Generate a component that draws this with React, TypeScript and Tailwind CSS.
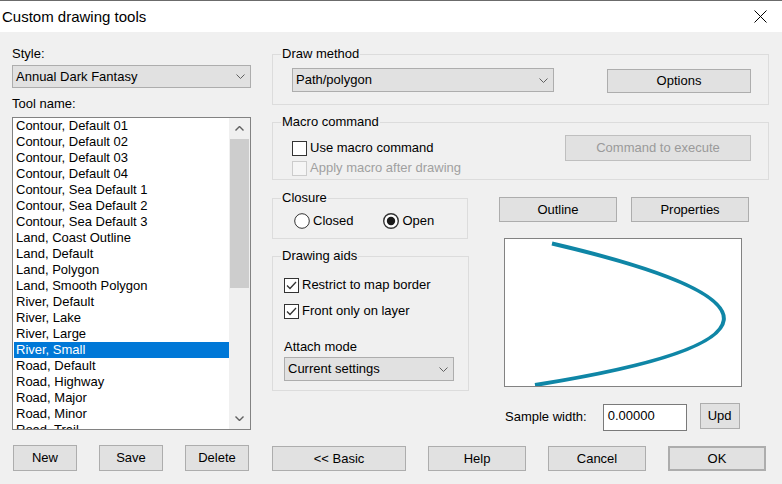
import React from "react";

const items = [
  "Contour, Default 01",
  "Contour, Default 02",
  "Contour, Default 03",
  "Contour, Default 04",
  "Contour, Sea Default 1",
  "Contour, Sea Default 2",
  "Contour, Sea Default 3",
  "Land, Coast Outline",
  "Land, Default",
  "Land, Polygon",
  "Land, Smooth Polygon",
  "River, Default",
  "River, Lake",
  "River, Large",
  "River, Small",
  "Road, Default",
  "Road, Highway",
  "Road, Major",
  "Road, Minor",
  "Road, Trail",
];

function Chevron() {
  return (
    <svg width="9" height="5" viewBox="0 0 9 5" className="shrink-0">
      <path d="M0.5 0.5 L4.5 4.5 L8.5 0.5" fill="none" stroke="#606060" strokeWidth="1" />
    </svg>
  );
}

function Combo({ text, className }: { text: string; className: string }) {
  return (
    <div className={`flex items-center justify-between border border-[#adadad] bg-[#e1e1e1] pl-[3px] pr-[5px] ${className}`}>
      <span>{text}</span>
      <Chevron />
    </div>
  );
}

function Btn({ text, className }: { text: string; className: string }) {
  return (
    <div className={`flex items-center justify-center border border-[#adadad] bg-[#e1e1e1] ${className}`}>{text}</div>
  );
}

function Check({ checked, disabled }: { checked?: boolean; disabled?: boolean }) {
  return (
    <div
      className={`flex h-[15px] w-[15px] shrink-0 items-center justify-center border ${
        disabled ? "border-[#cccccc] bg-[#f5f5f5]" : "border-[#333333] bg-white"
      }`}
    >
      {checked && (
        <svg width="11" height="9" viewBox="0 0 11 9">
          <path d="M1 4.5 L4 7.5 L10 1" fill="none" stroke="#333333" strokeWidth="1.3" />
        </svg>
      )}
    </div>
  );
}

function Radio({ checked }: { checked?: boolean }) {
  return (
    <svg width="16" height="16" viewBox="0 0 16 16" className="shrink-0">
      <circle cx="8" cy="8" r="7.3" fill="white" stroke="#333333" strokeWidth={checked ? 1.4 : 1} />
      {checked && <circle cx="8" cy="8" r="4.2" fill="#1a1a1a" />}
    </svg>
  );
}

function Group({ label, className, children }: { label: string; className: string; children?: React.ReactNode }) {
  return (
    <div className={`relative border border-[#dcdcdc] ${className}`}>
      <span className="absolute left-[8px] top-[-9px] bg-[#f0f0f0] px-[1px] leading-[16px]">{label}</span>
      {children}
    </div>
  );
}

export default function App() {
  return (
    <div className="h-[484px] w-[782px] overflow-hidden border-t border-[#6b6b6b] bg-[#f0f0f0] font-['Liberation_Sans',Arial,sans-serif] text-[13px] leading-[16px] text-black">
      {/* Title bar */}
      <div className="flex h-[31px] items-center justify-between bg-white pl-[2px] pr-[15px]">
        <span className="text-[15px]">Custom drawing tools</span>
        <svg width="13" height="13" viewBox="0 0 13 13">
          <path d="M0.5 0.5 L12.5 12.5 M12.5 0.5 L0.5 12.5" stroke="#000" strokeWidth="1" />
        </svg>
      </div>

      <div className="flex pl-[12px]">
        {/* Left column */}
        <div className="flex w-[239px] flex-col">
          <div className="mt-[14px] h-[16px]">Style:</div>
          <Combo text="Annual Dark Fantasy" className="mt-[3px] h-[23px]" />
          <div className="mt-[8px] h-[16px]">Tool name:</div>
          <div className="mt-[5px] flex h-[313px] overflow-hidden border border-[#828282] bg-white">
            <div className="flex-1 overflow-hidden pl-[1px]">
              {items.map((it) => (
                <div
                  key={it}
                  className={`h-[16px] pl-[2px] leading-[16px] ${it === "River, Small" ? "bg-[#0078d7] text-white" : ""}`}
                >
                  {it}
                </div>
              ))}
            </div>
            <div className="flex w-[21px] flex-col bg-[#f0f0f0]">
              <div className="flex h-[21px] items-center justify-center">
                <svg width="9" height="5" viewBox="0 0 9 5">
                  <path d="M0.5 4.5 L4.5 0.5 L8.5 4.5" fill="none" stroke="#606060" strokeWidth="1.4" />
                </svg>
              </div>
              <div className="mx-[1px] h-[149px] bg-[#cdcdcd]" />
              <div className="flex-1" />
              <div className="flex h-[21px] items-center justify-center">
                <svg width="9" height="5" viewBox="0 0 9 5">
                  <path d="M0.5 0.5 L4.5 4.5 L8.5 0.5" fill="none" stroke="#606060" strokeWidth="1.4" />
                </svg>
              </div>
            </div>
          </div>
          <div className="ml-[1px] mt-[15px] flex gap-[22px]">
            <Btn text="New" className="h-[26px] w-[64px]" />
            <Btn text="Save" className="h-[26px] w-[64px]" />
            <Btn text="Delete" className="h-[26px] w-[64px]" />
          </div>
        </div>

        {/* Right column */}
        <div className="ml-[21px] flex w-[497px] flex-col pt-[22px]">
          <Group label="Draw method" className="flex h-[51px] items-center pl-[19px] pr-[17px] pt-[1px]">
            <Combo text="Path/polygon" className="h-[24px] w-[262px]" />
            <Btn text="Options" className="ml-auto mt-[1px] h-[24px] w-[144px]" />
          </Group>

          <Group label="Macro command" className="mt-[17px] flex h-[58px] pl-[19px] pr-[17px]">
            <div className="flex flex-col pt-[17px]">
              <div className="flex h-[16px] items-center gap-[3px]">
                <Check />
                <span>Use macro command</span>
              </div>
              <div className="mt-[4px] flex h-[16px] items-center gap-[3px] text-[#a0a0a0]">
                <Check disabled />
                <span>Apply macro after drawing</span>
              </div>
            </div>
            <Btn
              text="Command to execute"
              className="ml-auto mt-[12px] h-[26px] w-[186px] border-[#bfbfbf] bg-[#cccccc] text-[#9a9a9a]"
            />
          </Group>

          <div className="mt-[17px] flex h-[234px]">
            <div className="flex w-[197px] flex-col">
              <Group label="Closure" className="mt-[1px] flex h-[41px] w-[196px] items-center pl-[21px] pt-[4px]">
                <div className="flex items-center gap-[3px]">
                  <Radio />
                  <span>Closed</span>
                </div>
                <div className="ml-[30px] flex items-center gap-[3px]">
                  <Radio checked />
                  <span>Open</span>
                </div>
              </Group>
              <Group label="Drawing aids" className="mt-[17px] flex h-[135px] flex-col pl-[11px] pt-[20px]">
                <div className="flex h-[16px] items-center gap-[3px]">
                  <Check checked />
                  <span>Restrict to map border</span>
                </div>
                <div className="mt-[10px] flex h-[16px] items-center gap-[3px]">
                  <Check checked />
                  <span>Front only on layer</span>
                </div>
                <div className="mt-[20px] h-[16px]">Attach mode</div>
                <Combo text="Current settings" className="mt-[2px] h-[24px] w-[170px]" />
              </Group>
            </div>

            <div className="ml-[30px] flex flex-col">
              <div className="flex gap-[14px]">
                <Btn text="Outline" className="h-[25px] w-[118px]" />
                <Btn text="Properties" className="h-[25px] w-[118px]" />
              </div>
              <div className="ml-[5px] mt-[16px] h-[149px] w-[238px] border border-[#828282] bg-white">
                <svg width="236" height="147" viewBox="0 0 236 147">
                  <path
                    d="M47 4.5 Q399 87 30 146"
                    fill="none"
                    stroke="#0f86a6"
                    strokeWidth="4"
                  />
                </svg>
              </div>
              <div className="mt-[16px] flex items-start">
                <span className="ml-[6px] mt-[6px]">Sample width:</span>
                <div className="ml-[16px] mt-[1px] h-[27px] w-[84px] border border-[#7a7a7a] bg-white pl-[4px] pt-[3px]">
                  0.00000
                </div>
                <Btn text="Upd" className="ml-[13px] h-[26px] w-[40px]" />
              </div>
            </div>
          </div>

          <div className="mt-[15px] flex">
            <Btn text="<< Basic" className="h-[25px] w-[134px]" />
            <Btn text="Help" className="ml-[22px] h-[25px] w-[98px]" />
            <Btn text="Cancel" className="ml-[22px] h-[25px] w-[98px]" />
            <Btn text="OK" className="ml-[22px] h-[25px] w-[98px] border-2 border-[#0078d7]" />
          </div>
        </div>
      </div>
    </div>
  );
}
